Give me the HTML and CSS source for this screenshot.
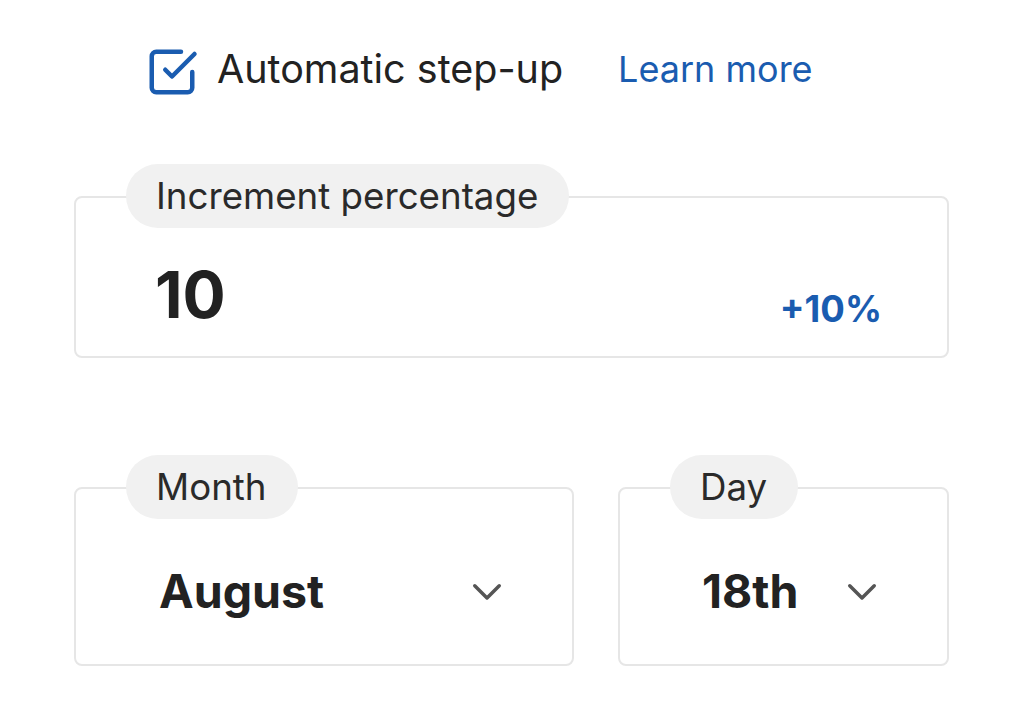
FILE: index.html
```html
<!DOCTYPE html>
<html lang="en">
<head>
  <meta charset="UTF-8">
  <title>Step-up settings</title>
  <link rel="stylesheet" href="styles.css">
</head>
<body>
  <div class="container">
    <div class="stepup-row">
      <svg class="check-icon" viewBox="0 0 24 24" fill="none" stroke="#1a5cb0" stroke-width="2" stroke-linecap="round" stroke-linejoin="round">
        <polyline points="9 11 12 14 22 4"></polyline>
        <path d="M21 12v7a2 2 0 0 1-2 2H5a2 2 0 0 1-2-2V5a2 2 0 0 1 2-2h11"></path>
      </svg>
      <span class="stepup-label">Automatic step-up</span>
      <a class="learn-more" href="#">Learn more</a>
    </div>

    <div class="field increment">
      <span class="pill">Increment percentage</span>
      <div class="field-body">
        <span class="big-value">10</span>
        <span class="delta">+10%</span>
      </div>
    </div>

    <div class="date-row">
      <div class="field month">
        <span class="pill">Month</span>
        <div class="field-body select">
          <span class="select-value">August</span>
          <svg class="chevron" viewBox="0 0 24 24" fill="none" stroke="#555" stroke-width="2" stroke-linecap="round" stroke-linejoin="round"><polyline points="5 9 12 16 19 9"></polyline></svg>
        </div>
      </div>
      <div class="field day">
        <span class="pill">Day</span>
        <div class="field-body select">
          <span class="select-value">18th</span>
          <svg class="chevron" viewBox="0 0 24 24" fill="none" stroke="#555" stroke-width="2" stroke-linecap="round" stroke-linejoin="round"><polyline points="5 9 12 16 19 9"></polyline></svg>
        </div>
      </div>
    </div>
  </div>
</body>
</html>
```

FILE: styles.css
```css
* { box-sizing: border-box; }
body {
  margin: 0;
  background: #ffffff;
  font-family: 'Inter', 'Noto Sans', sans-serif;
  color: #222222;
}
.container {
  padding: 50px 75px 0 74px;
}
.stepup-row {
  display: flex;
  align-items: center;
  margin-left: 76px;
  height: 44px;
}
.check-icon {
  width: 54px;
  height: 54px;
  margin-left: -5px;
}
.stepup-label {
  font-size: 39.5px;
  margin-left: 18px;
  margin-bottom: 6px;
}
.learn-more {
  font-size: 36px;
  color: #1a5cb0;
  text-decoration: none;
  margin-left: 55px;
  margin-bottom: 6px;
}
.field {
  position: relative;
  border: 2px solid #e6e6e6;
  border-radius: 8px;
}
.pill {
  position: absolute;
  top: -34px;
  left: 50px;
  height: 64px;
  padding: 0 31px 0 30px;
  border-radius: 32px;
  background: #f1f1f1;
  font-size: 36.7px;
  line-height: 64px;
  color: #2a2a2a;
}
.increment {
  margin-top: 102px;
  height: 162px;
}
.field-body {
  display: flex;
  align-items: center;
  height: 100%;
}
.increment .field-body {
  justify-content: space-between;
  padding: 34px 65px 0 79px;
}
.big-value {
  font-size: 64px;
  font-weight: 700;
}
.delta {
  font-size: 36.5px;
  font-weight: 700;
  color: #1a5cb0;
  margin-top: 30px;
}
.date-row {
  display: flex;
  gap: 44px;
  margin-top: 129px;
}
.month { width: 500px; height: 179px; }
.day { flex: 1; height: 179px; }
.select {
  justify-content: space-between;
  padding-top: 28px;
  padding-right: 64px;
}
.select-value {
  font-size: 46.5px;
  font-weight: 700;
}
.chevron {
  width: 42px;
  height: 42px;
}
.month .select { padding-left: 83px; }
.day .select { padding-left: 82px; }
```
